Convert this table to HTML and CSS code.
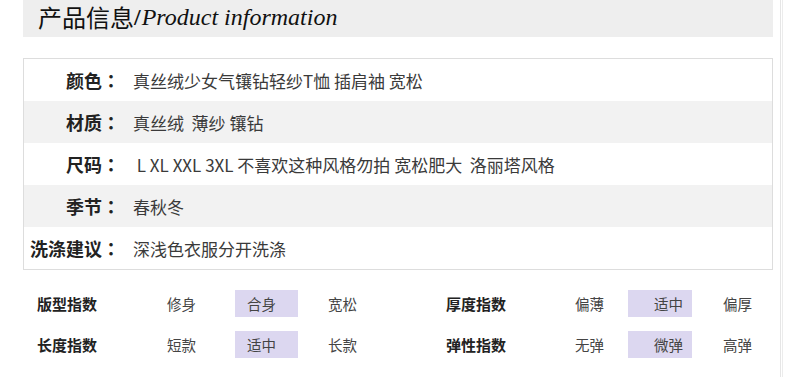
FILE: index.html
```html
<!DOCTYPE html>
<html lang="zh-CN">
<head>
<meta charset="utf-8">
<title>产品信息</title>
<link rel="stylesheet" href="styles.css">
</head>
<body>
<div class="page">
  <div class="content">
    <div class="title-bar">
      <span class="title-cn">产品信息</span><span class="title-slash">/</span><span class="title-en">Product information</span>
    </div>

    <div class="spec-table">
      <div class="spec-row">
        <div class="spec-label">颜色<span class="colon" lang="zh-TW">：</span></div>
        <div class="spec-value">真丝绒少女气镶钻轻纱T恤 插肩袖 宽松</div>
      </div>
      <div class="spec-row alt">
        <div class="spec-label">材质<span class="colon" lang="zh-TW">：</span></div>
        <div class="spec-value">真丝绒&nbsp;&nbsp;薄纱 镶钻</div>
      </div>
      <div class="spec-row">
        <div class="spec-label">尺码<span class="colon" lang="zh-TW">：</span></div>
        <div class="spec-value">&nbsp;L XL XXL 3XL 不喜欢这种风格勿拍 宽松肥大&nbsp;&nbsp;洛丽塔风格</div>
      </div>
      <div class="spec-row alt">
        <div class="spec-label">季节<span class="colon" lang="zh-TW">：</span></div>
        <div class="spec-value">春秋冬</div>
      </div>
      <div class="spec-row">
        <div class="spec-label">洗涤建议<span class="colon" lang="zh-TW">：</span></div>
        <div class="spec-value">深浅色衣服分开洗涤</div>
      </div>
    </div>

    <div class="index-grid">
      <div class="index-item left">
        <div class="idx-label">版型指数</div>
        <div class="opt o1">修身</div>
        <div class="opt sel">合身</div>
        <div class="opt o3">宽松</div>
      </div>
      <div class="index-item right">
        <div class="idx-label">厚度指数</div>
        <div class="opt o1">偏薄</div>
        <div class="opt sel">适中</div>
        <div class="opt o3">偏厚</div>
      </div>
      <div class="index-item left">
        <div class="idx-label">长度指数</div>
        <div class="opt o1">短款</div>
        <div class="opt sel">适中</div>
        <div class="opt o3">长款</div>
      </div>
      <div class="index-item right">
        <div class="idx-label">弹性指数</div>
        <div class="opt o1">无弹</div>
        <div class="opt sel">微弹</div>
        <div class="opt o3">高弹</div>
      </div>
    </div>
  </div>
  <div class="side-rule"></div>
</div>
</body>
</html>
```

FILE: styles.css
```css
html, body {
  margin: 0;
  padding: 0;
  background: #ffffff;
}

body {
  font-family: "Noto Sans CJK SC", "Noto Sans", sans-serif;
  color: #333;
  width: 790px;
  height: 377px;
  overflow: hidden;
}

.page {
  display: flex;
  height: 377px;
}

.content {
  width: 750px;
  margin-left: 23px;
}

.side-rule {
  width: 1px;
  margin-left: 7px;
  height: 377px;
  border-left: 1px solid #e6e6e6;
  border-right: 1px solid #ececec;
}

/* title */
.title-bar {
  height: 37px;
  background: #eeeeee;
  display: flex;
  align-items: center;
  padding-left: 15px;
  padding-bottom: 3px;
  box-sizing: border-box;
  line-height: 1;
}

.title-cn {
  font-size: 24px;
  color: #111;
  font-family: "Noto Sans CJK SC", sans-serif;
}

.title-slash {
  font-family: "Liberation Serif", serif;
  font-weight: bold;
  font-size: 24px;
  color: #111;
  margin-right: 1px;
}

.title-en {
  font-family: "Liberation Serif", serif;
  font-style: italic;
  font-size: 24px;
  color: #111;
}

/* spec table */
.spec-table {
  margin-top: 21px;
  border: 1px solid #dddddd;
  width: 750px;
  box-sizing: border-box;
}

.spec-row {
  display: flex;
  align-items: center;
  height: 42px;
}

.spec-row.alt {
  background: #f2f2f2;
}

.spec-label {
  width: 96px;
  text-align: right;
  font-size: 18px;
  font-weight: 700;
  color: #222;
}

.colon {
  font-family: "Noto Sans CJK TC", sans-serif;
}

.spec-value {
  margin-left: 13px;
  font-size: 17px;
  color: #3a3a3a;
  white-space: pre;
}

/* index grid */
.index-grid {
  margin-top: 20px;
  display: grid;
  grid-template-columns: 409px 1fr;
  row-gap: 14px;
  padding-left: 14px;
}

.index-item {
  display: flex;
  align-items: center;
  height: 27px;
}

.idx-label {
  font-size: 15px;
  font-weight: 700;
  color: #222;
}

.opt {
  font-size: 14.5px;
  color: #444;
  height: 27px;
  line-height: 27px;
  box-sizing: border-box;
}

.opt.sel {
  background: #dcd7f0;
  width: 63px;
}

.left .idx-label { width: 130px; }
.left .o1 { width: 68px; }
.left .sel { padding-left: 12px; }
.left .o3 { margin-left: 30px; }

.right .idx-label { width: 129px; }
.right .o1 { width: 53px; }
.right .sel { padding-left: 26px; width: 64px; }
.right .o3 { margin-left: 31px; }
```
